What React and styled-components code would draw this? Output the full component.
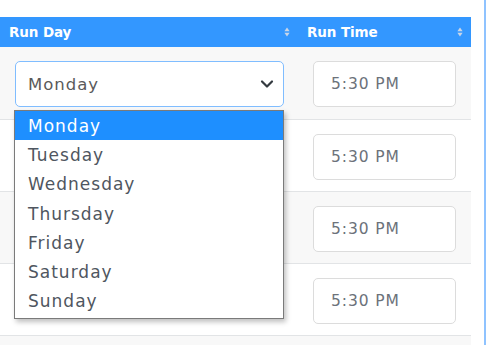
import styled, { createGlobalStyle } from "styled-components";

const GlobalStyle = createGlobalStyle`
  body {
    margin: 0;
    background: #fff;
    font-family: "DejaVu Sans", "Open Sans", sans-serif;
  }
`;

const Page = styled.div`
  width: 488px;
  height: 345px;
  overflow: hidden;
  padding-top: 17px;
  box-sizing: border-box;
  position: relative;
  &::after {
    content: "";
    position: absolute;
    top: 0;
    bottom: 0;
    left: 484px;
    width: 2px;
    background: #8fc3ff;
  }
`;

const Table = styled.div`
  width: 471px;
  position: relative;
`;

const HeadRow = styled.div`
  display: grid;
  grid-template-columns: 298px 1fr;
  height: 30px;
  background: #3397ff;
`;

const HeadCell = styled.div`
  display: flex;
  align-items: center;
  justify-content: space-between;
  padding: 0 8px 0 9px;
  color: #fff;
  font-weight: 700;
  font-size: 13.5px;
  letter-spacing: -0.1px;
`;

const Row = styled.div`
  display: grid;
  grid-template-columns: 298px 1fr;
  height: 72px;
  box-sizing: border-box;
  border-top: ${(p) => (p.first ? "none" : "1px solid #e2e4e6")};
  background: ${(p) => (p.striped ? "#f8f8f8" : "#fff")};
`;

const Cell = styled.div`
  padding: 14px 14px 0 15px;
  position: relative;
`;

const SelectBox = styled.div`
  height: 46px;
  box-sizing: border-box;
  border: 1px solid #80bdff;
  border-radius: 5px;
  background: #fff;
  display: flex;
  align-items: center;
  justify-content: space-between;
  padding: 0 8px 0 12px;
  color: #5a5a5a;
  font-size: 16.5px;
  letter-spacing: 1px;
  width: 269px;
`;

const TimeBox = styled.div`
  width: 143px;
  height: 46px;
  box-sizing: border-box;
  border: 1px solid #dcdcdc;
  border-radius: 5px;
  background: #fff;
  display: flex;
  align-items: center;
  padding-left: 17px;
  color: #6c727a;
  font-size: 15.5px;
  letter-spacing: 0.9px;
`;

const Menu = styled.ul`
  position: absolute;
  top: 93px;
  left: 14px;
  width: 270px;
  margin: 0;
  padding: 0 0 2px;
  list-style: none;
  background: #fff;
  border: 1px solid #7a7a7a;
  box-shadow: 2px 3px 5px rgba(0, 0, 0, 0.25);
  box-sizing: border-box;
  z-index: 2;
`;

const Option = styled.li`
  height: 29.3px;
  display: flex;
  align-items: center;
  padding-left: 13px;
  font-size: 17px;
  letter-spacing: 1px;
  color: ${(p) => (p.active ? "#fff" : "#4f5660")};
  background: ${(p) => (p.active ? "#1e8fff" : "transparent")};
`;

const SortIcon = () => (
  <svg width="6" height="10" viewBox="0 0 6 10">
    <path d="M3 0.5 L5.6 4.3 H0.4 Z" fill="#c9d6e8" />
    <path d="M3 9.5 L5.6 5.7 H0.4 Z" fill="#c9d6e8" />
  </svg>
);

const Chevron = () => (
  <svg width="16" height="16" viewBox="0 0 16 16">
    <path
      d="M3 5.5 L8 10.5 L13 5.5"
      fill="none"
      stroke="#343a40"
      strokeWidth="2.2"
      strokeLinecap="round"
      strokeLinejoin="round"
    />
  </svg>
);

const days = [
  "Monday",
  "Tuesday",
  "Wednesday",
  "Thursday",
  "Friday",
  "Saturday",
  "Sunday",
];

export default function App() {
  const rows = [0, 1, 2, 3];
  return (
    <>
      <GlobalStyle />
      <Page>
        <Table>
          <HeadRow>
            <HeadCell>
              Run Day <SortIcon />
            </HeadCell>
            <HeadCell>
              Run Time <SortIcon />
            </HeadCell>
          </HeadRow>
          {rows.map((r) => (
            <Row key={r} first={r === 0} striped={r % 2 === 0}>
              <Cell>
                {r === 0 && (
                  <SelectBox>
                    Monday <Chevron />
                  </SelectBox>
                )}
              </Cell>
              <Cell>
                <TimeBox>5:30 PM</TimeBox>
              </Cell>
            </Row>
          ))}
          <Row striped />
          <Menu>
            {days.map((d) => (
              <Option key={d} active={d === "Monday"}>
                {d}
              </Option>
            ))}
          </Menu>
        </Table>
      </Page>
    </>
  );
}
